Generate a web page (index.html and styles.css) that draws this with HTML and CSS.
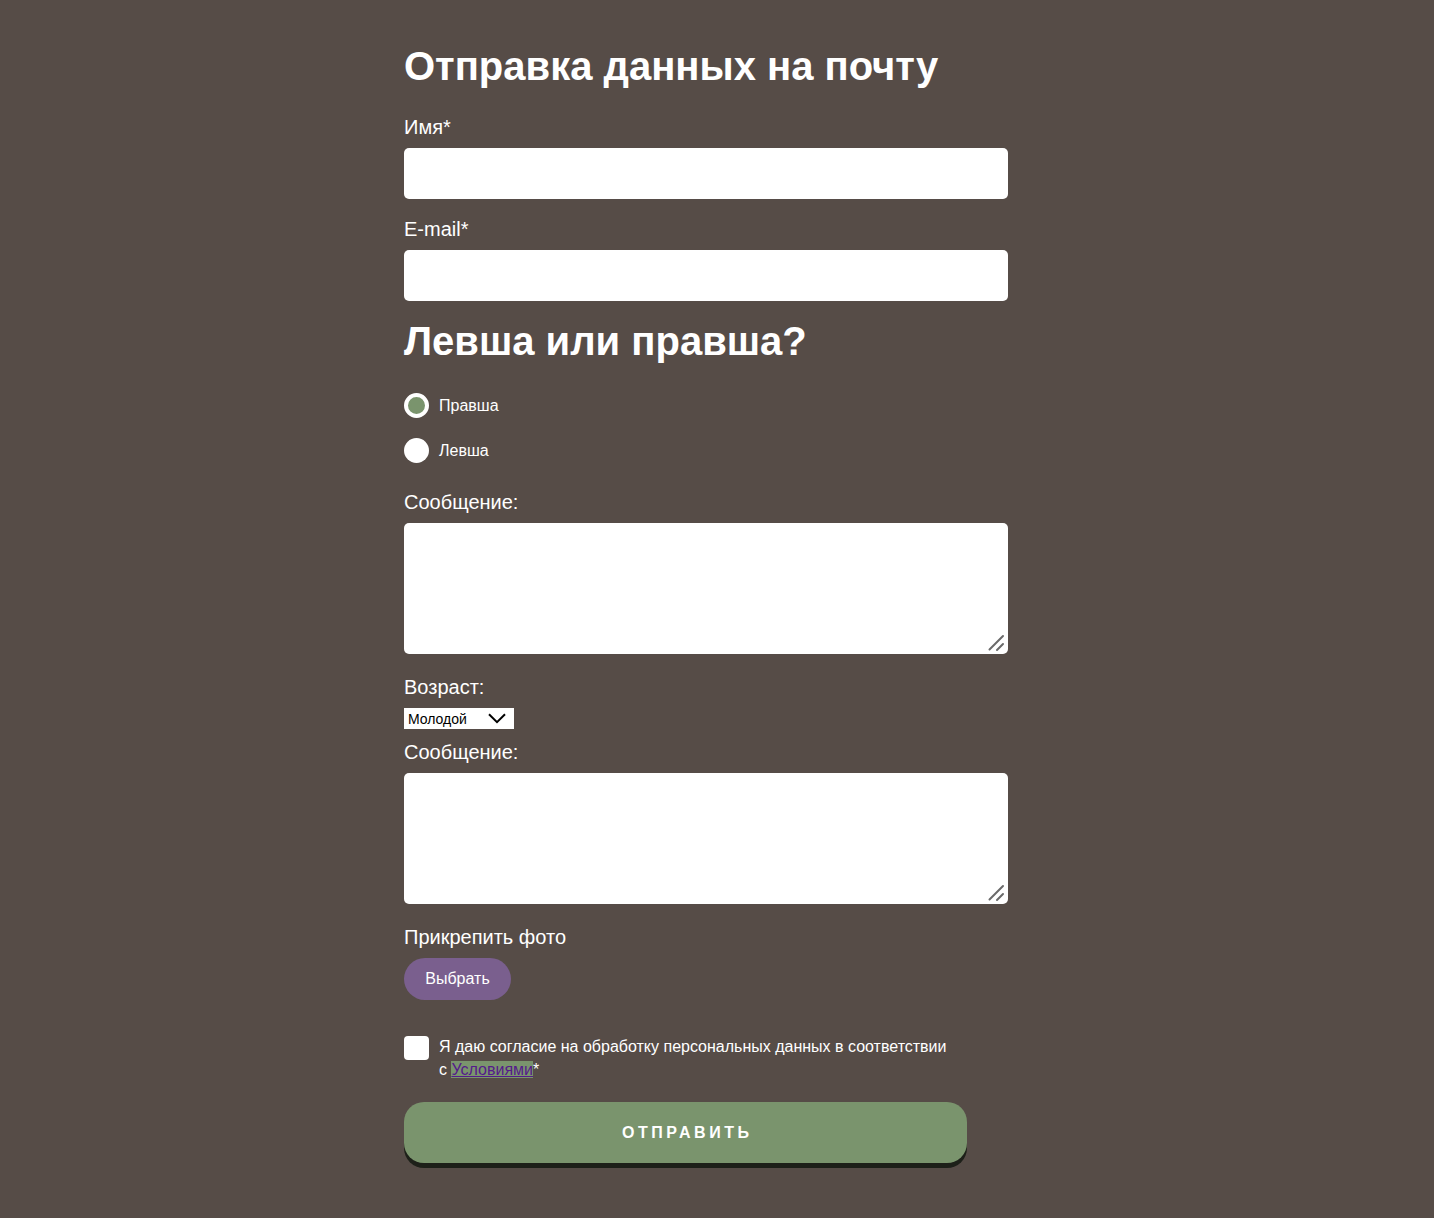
FILE: index.html
```html
<!DOCTYPE html>
<html lang="ru">
<head>
<meta charset="utf-8">
<title>Отправка данных на почту</title>
<link rel="stylesheet" href="styles.css">
</head>
<body>
<form class="form">
  <h1 class="title">Отправка данных на почту</h1>

  <label class="label label-first" for="name">Имя*</label>
  <input class="input" id="name" type="text">

  <label class="label label-mail" for="mail">E-mail*</label>
  <input class="input" id="mail" type="email">

  <h2 class="title title-second">Левша или правша?</h2>

  <label class="radio-row radio-first">
    <input class="radio" type="radio" name="hand" checked>
    <span class="radio-text">Правша</span>
  </label>
  <label class="radio-row radio-second">
    <input class="radio" type="radio" name="hand">
    <span class="radio-text">Левша</span>
  </label>

  <label class="label label-msg" for="msg1">Сообщение:</label>
  <div class="area-wrap">
    <textarea class="textarea" id="msg1"></textarea>
    <svg class="grip" width="18" height="18" viewBox="0 0 18 18" aria-hidden="true">
      <path d="M1.5 15.5 L15 2 M9 16 L15 10" fill="none" stroke="#6a6a6a" stroke-width="2" stroke-linecap="round"/>
    </svg>
  </div>

  <label class="label label-age" for="age">Возраст:</label>
  <div class="select-wrap">
    <select class="select" id="age">
      <option>Молодой</option>
      <option>Средний</option>
      <option>Пожилой</option>
    </select>
    <svg class="chevron" width="18" height="11" viewBox="0 0 18 11" aria-hidden="true">
      <path d="M1 1.2 L9 9.2 L17 1.2" fill="none" stroke="#000" stroke-width="2"/>
    </svg>
  </div>

  <label class="label label-msg2" for="msg2">Сообщение:</label>
  <div class="area-wrap">
    <textarea class="textarea" id="msg2"></textarea>
    <svg class="grip" width="18" height="18" viewBox="0 0 18 18" aria-hidden="true">
      <path d="M1.5 15.5 L15 2 M9 16 L15 10" fill="none" stroke="#6a6a6a" stroke-width="2" stroke-linecap="round"/>
    </svg>
  </div>

  <div class="label label-photo">Прикрепить фото</div>
  <label class="file-btn">
    <input class="file-input" type="file" accept="image/*">
    Выбрать
  </label>

  <label class="agree">
    <input class="check" type="checkbox">
    <span class="agree-text">Я даю согласие на обработку персональных данных в соответствии с <a class="agree-link" href="#terms">Условиями</a>*</span>
  </label>

  <button class="submit" type="submit">ОТПРАВИТЬ</button>
</form>
</body>
</html>
```
FILE: styles.css
```css
html, body {
  margin: 0;
  padding: 0;
}

body {
  background: #564c47;
  color: #ffffff;
  font-family: "Liberation Sans", Arial, sans-serif;
}

.form {
  width: 626px;
  margin: 0 auto;
  padding: 43px 0 50px;
  display: flex;
  flex-direction: column;
  align-items: flex-start;
}

.title {
  margin: 0;
  font-size: 40px;
  line-height: 46px;
  font-weight: 700;
}

.title-second {
  margin-top: 17px;
}

.label {
  display: block;
  font-size: 20px;
  line-height: 23px;
  margin-bottom: 9px;
}

.label-first { margin-top: 27px; }
.label-mail { margin-top: 19px; margin-bottom: 9px; }
.label-msg { margin-top: 28px; margin-bottom: 9px; }
.label-age { margin-top: 22px; margin-bottom: 9px; }
.label-msg2 { margin-top: 12px; margin-bottom: 9px; }
.label-photo { margin-top: 22px; margin-bottom: 9px; }

.input {
  box-sizing: border-box;
  width: 604px;
  height: 51px;
  margin: 0;
  border: none;
  border-radius: 5px;
  background: #ffffff;
  padding: 0 14px;
  font: 16px "Liberation Sans", Arial, sans-serif;
  outline: none;
}

.radio-row {
  display: flex;
  align-items: center;
  gap: 10px;
  height: 25px;
  cursor: pointer;
}

.radio-first { margin-top: 29px; }
.radio-second { margin-top: 20px; }

.radio {
  appearance: none;
  -webkit-appearance: none;
  box-sizing: border-box;
  width: 25px;
  height: 25px;
  margin: 0;
  border-radius: 50%;
  background: #ffffff;
  flex: none;
}

.radio:checked {
  background: #7a946d;
  border: 4px solid #ffffff;
}

.radio-text {
  font-size: 16px;
  line-height: 20px;
}

.area-wrap {
  position: relative;
  width: 604px;
  height: 131px;
}

.textarea {
  box-sizing: border-box;
  display: block;
  width: 604px;
  height: 131px;
  margin: 0;
  border: none;
  border-radius: 5px;
  background: #ffffff;
  padding: 10px 14px;
  font: 16px "Liberation Sans", Arial, sans-serif;
  resize: none;
  outline: none;
}

.grip {
  position: absolute;
  right: 2px;
  bottom: 2px;
  pointer-events: none;
}

.select-wrap {
  position: relative;
  width: 110px;
  height: 21px;
}

.select {
  appearance: none;
  -webkit-appearance: none;
  box-sizing: border-box;
  display: block;
  width: 110px;
  height: 21px;
  margin: 0;
  border: none;
  border-radius: 0;
  background: #ffffff;
  color: #000000;
  padding: 0 0 0 4px;
  font: 14px "Liberation Sans", Arial, sans-serif;
  outline: none;
}

.chevron {
  position: absolute;
  right: 8px;
  top: 5px;
  pointer-events: none;
}

.file-btn {
  box-sizing: border-box;
  display: flex;
  align-items: center;
  justify-content: center;
  width: 107px;
  height: 42px;
  border-radius: 21px;
  background: #7a5f8e;
  color: #ffffff;
  font-size: 16px;
  cursor: pointer;
}

.file-input {
  display: none;
}

.agree {
  display: flex;
  align-items: flex-start;
  gap: 10px;
  margin-top: 36px;
  width: 563px;
  cursor: pointer;
}

.check {
  appearance: none;
  -webkit-appearance: none;
  box-sizing: border-box;
  width: 25px;
  height: 24px;
  margin: 0;
  border-radius: 4px;
  background: #ffffff;
  flex: none;
}

.agree-text {
  max-width: 515px;
  font-size: 16px;
  line-height: 23px;
  margin-top: -1px;
}

.agree-link {
  color: #551a8b;
  background: #7a946d;
  text-decoration: underline;
}

.submit {
  box-sizing: border-box;
  width: 563px;
  height: 61px;
  margin-top: 21px;
  border: none;
  border-radius: 20px;
  background: #7a946d;
  box-shadow: 0 5px 0 #1d2019;
  color: #ffffff;
  font: 700 16px "Liberation Sans", Arial, sans-serif;
  letter-spacing: 3.5px;
  text-indent: 3.5px;
  cursor: pointer;
}
```
